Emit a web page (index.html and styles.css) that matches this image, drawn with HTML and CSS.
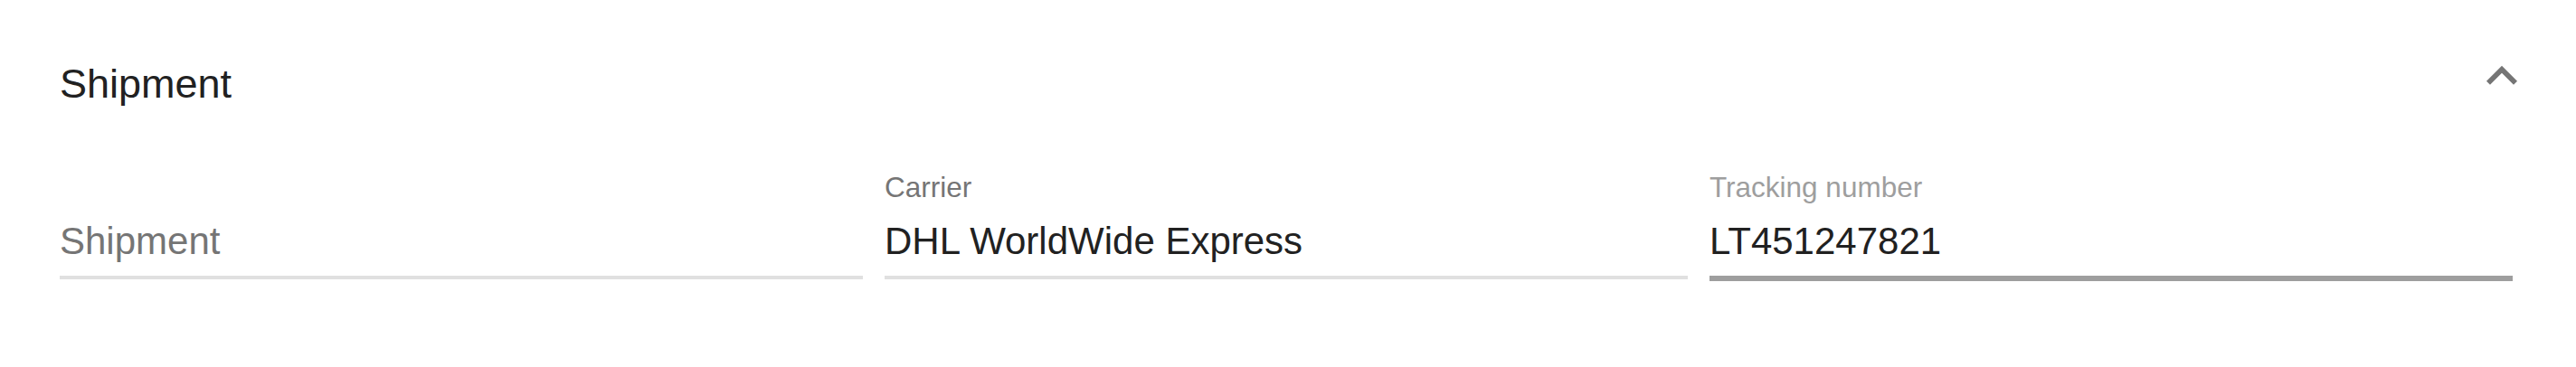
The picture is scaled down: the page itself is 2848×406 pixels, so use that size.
FILE: index.html
```html
<!DOCTYPE html>
<html lang="en">
<head>
<meta charset="utf-8">
<title>Shipment</title>
<link rel="stylesheet" href="styles.css">
</head>
<body>
<section class="panel">
  <header class="panel-header">
    <h2 class="panel-title">Shipment</h2>
    <button class="icon-button" type="button" aria-label="Collapse">
      <svg class="icon" viewBox="0 0 24 24" width="68" height="68" aria-hidden="true">
        <path d="M12 8l-6 6 1.41 1.41L12 10.83l4.59 4.58L18 14z"/>
      </svg>
    </button>
  </header>
  <div class="fields">
    <label class="field">
      <span class="field-label field-label--hidden">Shipment</span>
      <input class="field-input" type="text" placeholder="Shipment">
      <span class="underline"></span>
    </label>
    <label class="field">
      <span class="field-label">Carrier</span>
      <input class="field-input" type="text" value="DHL WorldWide Express">
      <span class="underline"></span>
    </label>
    <label class="field field--hover">
      <span class="field-label field-label--light">Tracking number</span>
      <input class="field-input" type="text" value="LT451247821">
      <span class="underline"></span>
    </label>
  </div>
</section>
</body>
</html>
```
FILE: styles.css
```css
html, body {
  margin: 0;
  padding: 0;
  background: #ffffff;
}

body {
  font-family: "Liberation Sans", Arial, Helvetica, sans-serif;
  color: #212121;
}

.panel {
  padding: 0 70px 0 66px;
}

.panel-header {
  display: flex;
  justify-content: space-between;
  align-items: flex-start;
  padding-top: 50px;
}

.panel-title {
  margin: 18px 0 0 0;
  font-size: 45px;
  line-height: 50px;
  font-weight: 400;
  color: #212121;
}

.icon-button {
  display: block;
  width: 68px;
  height: 68px;
  margin-right: -22px;
  padding: 0;
  border: 0;
  background: transparent;
  cursor: pointer;
}

.icon {
  display: block;
  fill: #757575;
}

.fields {
  display: grid;
  grid-template-columns: repeat(3, 1fr);
  column-gap: 24px;
  padding-top: 74px;
}

.field {
  display: flex;
  flex-direction: column;
}

.field-label {
  display: block;
  font-size: 31.5px;
  line-height: 30px;
  height: 30px;
  color: #757575;
  margin-bottom: 21px;
}

.field-label--hidden {
  visibility: hidden;
}

.field-label--light {
  color: #9e9e9e;
}

.field-input {
  display: block;
  width: 100%;
  box-sizing: border-box;
  height: 48px;
  margin: 0 0 14px 0;
  padding: 0;
  border: 0;
  outline: none;
  background: transparent;
  font-family: inherit;
  font-size: 42px;
  line-height: 48px;
  color: #212121;
}

.field-input::placeholder {
  color: #757575;
  opacity: 1;
}

.underline {
  display: block;
  height: 4px;
  background: #e0e0e0;
}

.field--hover .underline {
  height: 6px;
  background: #9e9e9e;
}
```
